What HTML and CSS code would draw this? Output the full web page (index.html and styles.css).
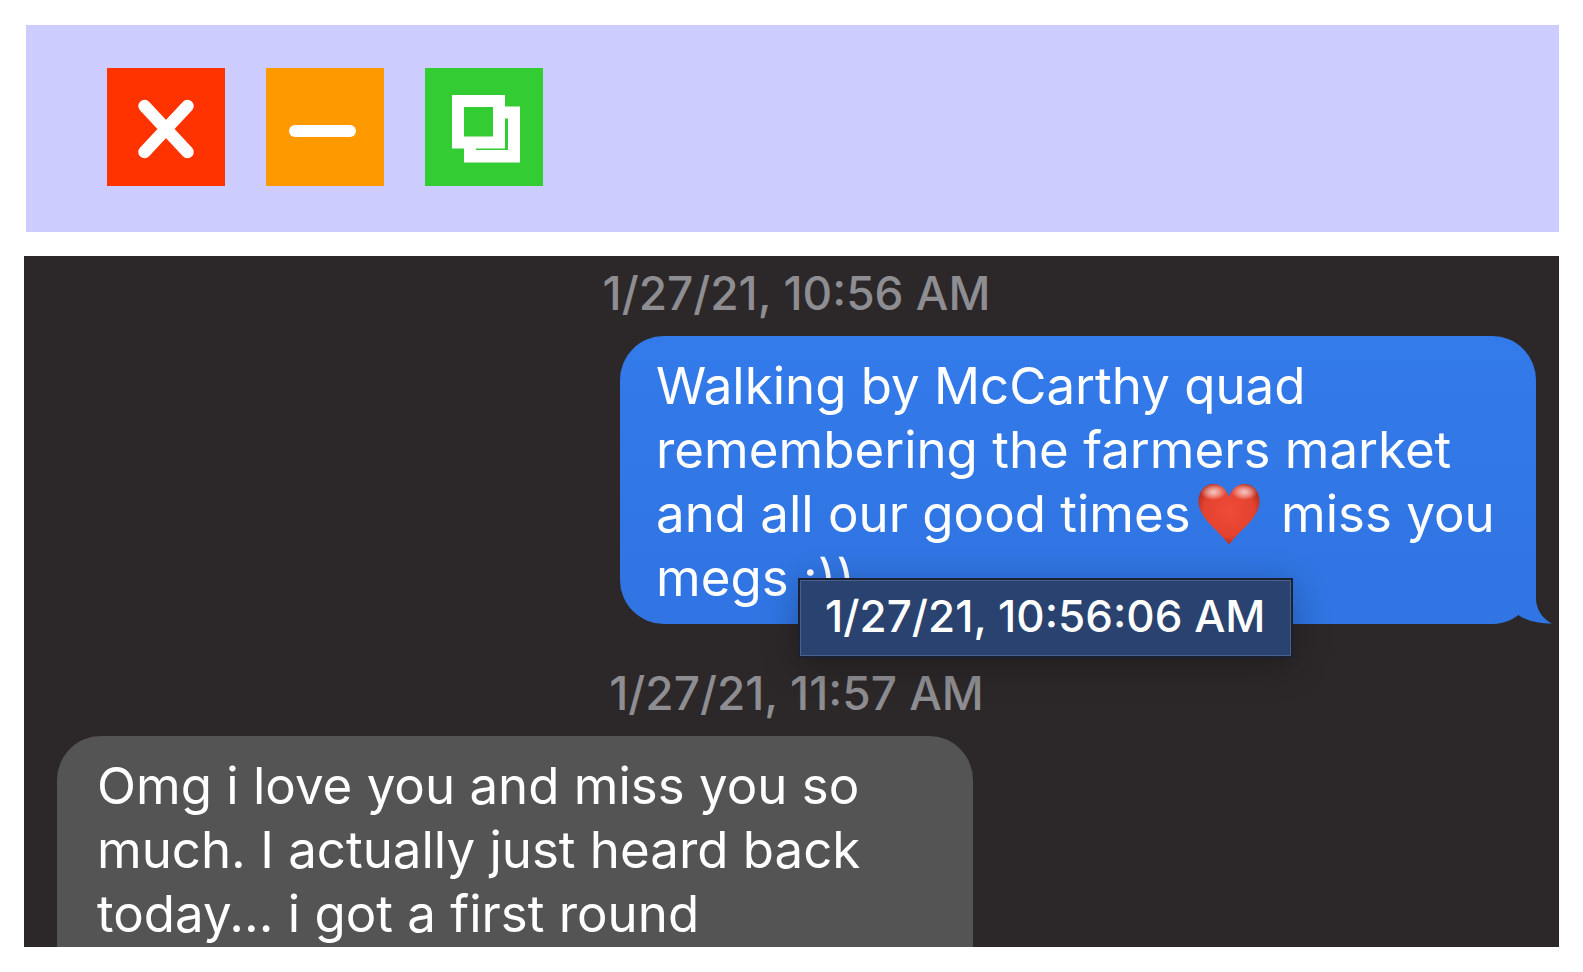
FILE: index.html
```html
<!DOCTYPE html>
<html lang="en">
<head>
<meta charset="utf-8">
<title>Messages</title>
<link rel="stylesheet" href="styles.css">
</head>
<body>
<header class="titlebar">
  <button class="control control-close" type="button" aria-label="Close">
    <svg viewBox="0 0 118 118" aria-hidden="true"><path d="M37.5 38 80.500 84M80.500 38 37.500 84" fill="none" stroke="#fff" stroke-width="12.500" stroke-linecap="round"/></svg>
  </button>
  <button class="control control-minimize" type="button" aria-label="Minimize">
    <svg viewBox="0 0 118 118" aria-hidden="true"><rect x="23" y="57" width="67" height="12" rx="6" fill="#fff"/></svg>
  </button>
  <button class="control control-restore" type="button" aria-label="Restore">
    <svg viewBox="0 0 118 118" aria-hidden="true"><path d="M27 27H80V38.500H95V94.500H39V80.500H27ZM39 39V68.500H68V39ZM80 50.500V80.500H51V82H83V50.500Z" fill="#fff" fill-rule="evenodd"/></svg>
  </button>
</header>
<main class="chat">
  <time class="stamp">1/27/21, 10:56 AM</time>
  <div class="bubble bubble-sent">
    <p class="text">Walking by McCarthy quad remembering the farmers market and all our good times<svg class="heart" viewBox="0 0 62 62" role="img" aria-label="red heart">
      <defs>
        <radialGradient id="heart-fill" cx="50%" cy="45%" r="60%"><stop offset="0" stop-color="#f04c38"/><stop offset=".7" stop-color="#e2422f"/><stop offset="1" stop-color="#a8241b"/></radialGradient>
        <radialGradient id="heart-shine"><stop offset="0" stop-color="#fff" stop-opacity=".7"/><stop offset=".5" stop-color="#fff" stop-opacity=".4"/><stop offset="1" stop-color="#fff" stop-opacity="0"/></radialGradient>
      </defs>
      <path d="M31 14C28 5 22 1 15.500 1 7 1 .5 8 .5 18 .5 35 19 46 31 61.500 43 46 61.500 35 61.500 18 61.500 8 55 1 46.500 1 40 1 34 5 31 14Z" fill="url(#heart-fill)"/>
      <ellipse cx="15.500" cy="9" rx="13" ry="8" fill="url(#heart-shine)"/>
      <ellipse cx="46.500" cy="9" rx="13" ry="8" fill="url(#heart-shine)"/>
    </svg> miss you megs :))</p>
    <svg class="tail" viewBox="0 0 60 44" aria-hidden="true"><path d="M0 0H44V20C45 31 51 39 60 43.500 46 43.500 34 41 25 34 17 40 10 44 0 44Z" fill="#3075e3"/></svg>
    <div class="tooltip" role="tooltip">1/27/21, 10:56:06 AM</div>
  </div>
  <time class="stamp stamp-later">1/27/21, 11:57 AM</time>
  <div class="bubble bubble-received">
    <p class="text">Omg i love you and miss you so much. I actually just heard back today... i got a first round</p>
  </div>
</main>
</body>
</html>
```
FILE: styles.css
```css
* {
  box-sizing: border-box;
}

body {
  display: flex;
  flex-direction: column;
  gap: 24px;
  height: 100vh;
  margin: 0;
  padding: 25px 24px;
  background: #fff;
  font-family: Inter, "Liberation Sans", sans-serif;
}

.titlebar {
  display: flex;
  gap: 41px;
  margin-left: 2px;
  padding: 43px 81px 46px;
  background: #ccccff;
}

.control {
  width: 118px;
  height: 118px;
  padding: 0;
  border: 0;
}

.control svg {
  display: block;
}

.control-close {
  background: #ff3300;
}

.control-minimize {
  background: #ff9900;
}

.control-restore {
  background: #33cc33;
}

.chat {
  display: flex;
  flex: 1;
  flex-direction: column;
  min-height: 0;
  padding: 8px 23px 0 33px;
  overflow: hidden;
  background: #2c2829;
}

.stamp {
  flex: none;
  padding-bottom: 14px;
  color: #8e8d92;
  font-size: 46px;
  font-weight: 500;
  line-height: 58px;
  text-align: center;
}

.stamp-later {
  padding-top: 40px;
}

.bubble {
  position: relative;
  flex: none;
  width: 916px;
  max-width: 100%;
  color: #fff;
  font-size: 51px;
  font-weight: 400;
  line-height: 64px;
}

.bubble-sent {
  align-self: flex-end;
  padding: 18px 36px 14px;
  border-radius: 44px;
  background: linear-gradient(#337aea, #3075e3 80%);
}

.bubble-received {
  flex: 1 0 auto;
  padding: 18px 40px 14px;
  border-radius: 44px 44px 0 0;
  background: #545454;
}

.text {
  margin: 0;
}

.heart {
  width: 62px;
  height: 62px;
  margin: -4px 7px 0;
  vertical-align: -13px;
}

.tail {
  position: absolute;
  right: -16px;
  bottom: 0;
  width: 60px;
  height: 44px;
}

.tooltip {
  position: absolute;
  top: 243px;
  left: 179px;
  z-index: 1;
  padding: 9px 24px 13px;
  border: 2px solid #4a6288;
  outline: 2px solid #1a2132;
  outline-offset: -1px;
  background: #29426f;
  box-shadow: 0 8px 36px rgba(0, 0, 0, 0.3);
  font-size: 44px;
  font-weight: 500;
  line-height: 52px;
  white-space: nowrap;
}
```
